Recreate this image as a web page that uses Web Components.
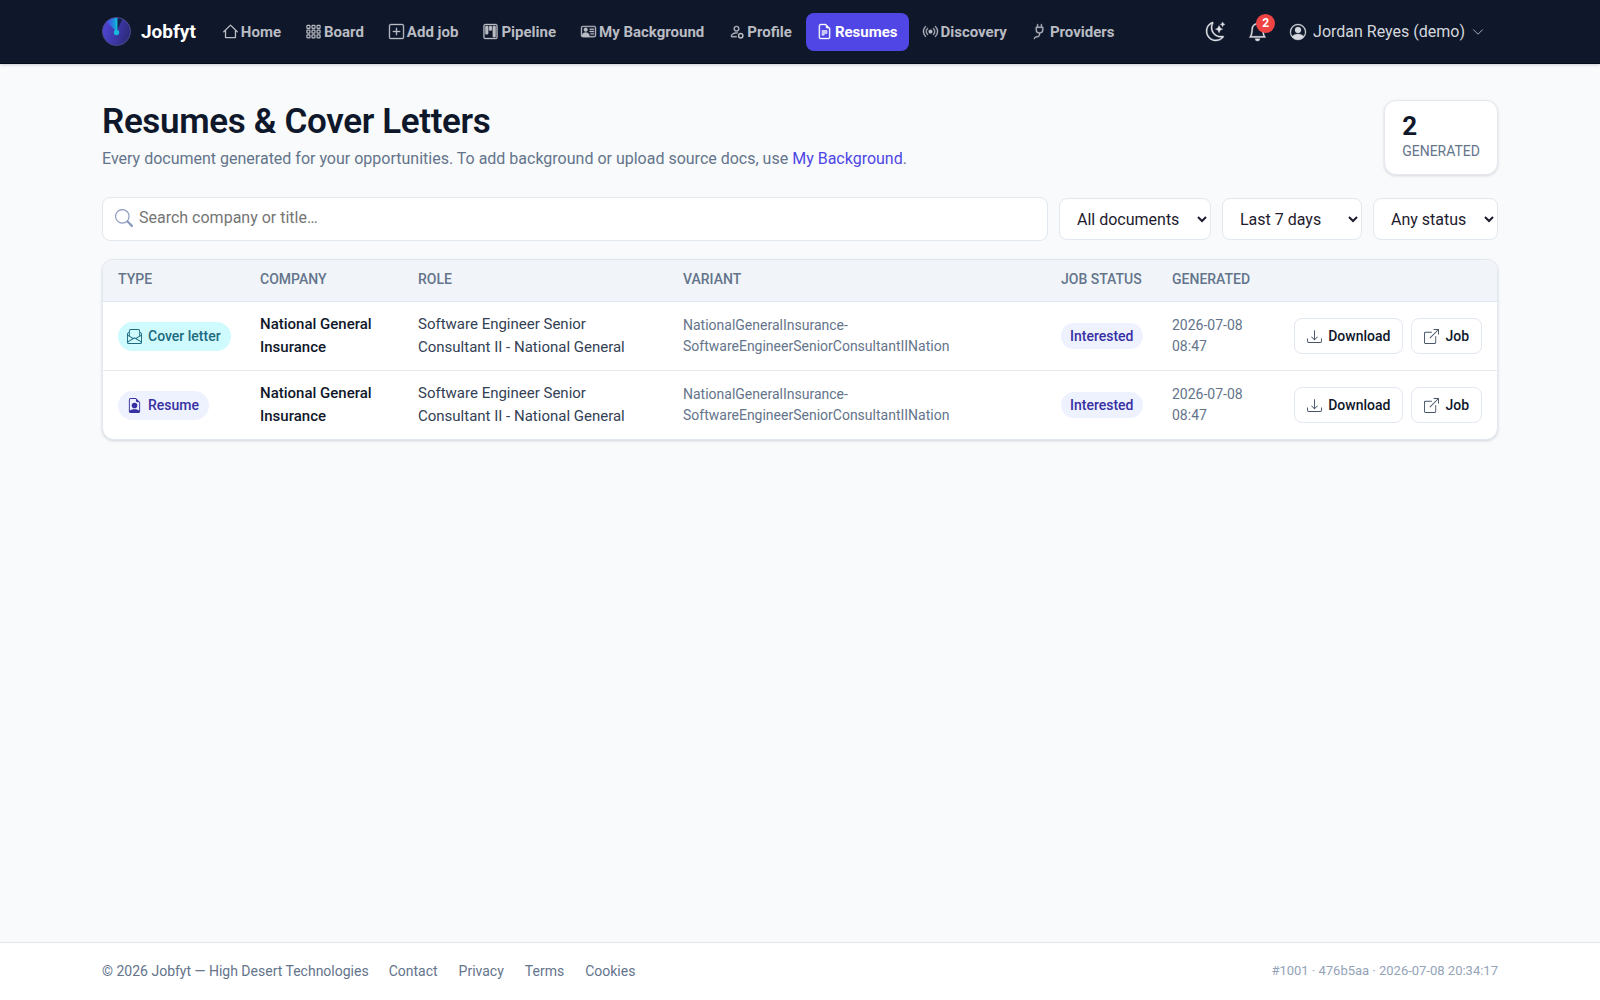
<!DOCTYPE html>
<html lang="en">
<head>
<meta charset="utf-8">
<meta name="viewport" content="width=device-width, initial-scale=1">
<title>Resumes &amp; Cover Letters - Jobfyt</title>
<style>
html{height:100%}
body{margin:0;min-height:100%;background:#f8fafc;color:#0f172a;font:15px/22px Roboto,"Liberation Sans",sans-serif}
</style>
</head>
<body>
<jf-app></jf-app>
<script>
const ICONS = {
  house:'<path d="M.8 8.3 8 1.2l7.200 7.100M2.700 6.600V14.500h10.600V6.600" fill="none" stroke="currentColor" stroke-width="1.400" stroke-linecap="round" stroke-linejoin="round"/>',
  grid:'<g fill="none" stroke="currentColor" stroke-width="1.300"><rect x="1" y="1.500" width="3.200" height="3.200" rx=".6"/><rect x="6.400" y="1.500" width="3.200" height="3.200" rx=".6"/><rect x="11.800" y="1.500" width="3.200" height="3.200" rx=".6"/><rect x="1" y="6.500" width="3.200" height="3.200" rx=".6"/><rect x="6.400" y="6.500" width="3.200" height="3.200" rx=".6"/><rect x="11.800" y="6.500" width="3.200" height="3.200" rx=".6"/><rect x="1" y="11.500" width="3.200" height="3.200" rx=".6"/><rect x="6.400" y="11.500" width="3.200" height="3.200" rx=".6"/><rect x="11.800" y="11.500" width="3.200" height="3.200" rx=".6"/></g>',
  plus:'<path d="M14 1a1 1 0 0 1 1 1v12a1 1 0 0 1-1 1H2a1 1 0 0 1-1-1V2a1 1 0 0 1 1-1zM2 0a2 2 0 0 0-2 2v12a2 2 0 0 0 2 2h12a2 2 0 0 0 2-2V2a2 2 0 0 0-2-2z"/><path d="M8 4a.5.5 0 0 1 .5.5v3h3a.5.5 0 0 1 0 1h-3v3a.5.5 0 0 1-1 0v-3h-3a.5.5 0 0 1 0-1h3v-3A.5.5 0 0 1 8 4"/>',
  kanban:'<path d="M13.500 1a1 1 0 0 1 1 1v12a1 1 0 0 1-1 1h-11a1 1 0 0 1-1-1V2a1 1 0 0 1 1-1zm-11-1a2 2 0 0 0-2 2v12a2 2 0 0 0 2 2h11a2 2 0 0 0 2-2V2a2 2 0 0 0-2-2z"/><path d="M6.500 3a1 1 0 0 1 1-1h1a1 1 0 0 1 1 1v3a1 1 0 0 1-1 1h-1a1 1 0 0 1-1-1zm-4 0a1 1 0 0 1 1-1h1a1 1 0 0 1 1 1v7a1 1 0 0 1-1 1h-1a1 1 0 0 1-1-1zm8 0a1 1 0 0 1 1-1h1a1 1 0 0 1 1 1v10a1 1 0 0 1-1 1h-1a1 1 0 0 1-1-1z"/>',
  vcard:'<path d="M5 8a2 2 0 1 0 0-4 2 2 0 0 0 0 4m4-2.500a.5.5 0 0 1 .5-.5h4a.5.5 0 0 1 0 1h-4a.5.5 0 0 1-.5-.5M9 8a.5.5 0 0 1 .5-.5h4a.5.5 0 0 1 0 1h-4A.5.5 0 0 1 9 8m1 2.500a.5.5 0 0 1 .5-.5h3a.5.5 0 0 1 0 1h-3a.5.5 0 0 1-.5-.5"/><path d="M2 2a2 2 0 0 0-2 2v8a2 2 0 0 0 2 2h12a2 2 0 0 0 2-2V4a2 2 0 0 0-2-2zM1 4a1 1 0 0 1 1-1h12a1 1 0 0 1 1 1v8a1 1 0 0 1-1 1H8.960q.04-.245.040-.5C9 10.567 7.210 9 5 9c-2.086 0-3.800 1.398-3.984 3.181A1 1 0 0 1 1 12z"/>',
  gear:'<path d="M11 5a3 3 0 1 1-6 0 3 3 0 0 1 6 0M8 7a2 2 0 1 0 0-4 2 2 0 0 0 0 4m.256 7a4.500 4.500 0 0 1-.229-1.004H3c.001-.246.154-.986.832-1.664C4.484 10.680 5.711 10 8 10q.39 0 .74.025c.226-.341.496-.65.804-.918Q8.844 9.002 8 9c-5 0-6 3-6 4s1 1 1 1z"/><circle cx="12.500" cy="12.500" r="2.300" fill="none" stroke="currentColor" stroke-width="1.600"/>',
  file:'<path d="M5.500 7a.5.5 0 0 0 0 1h5a.5.5 0 0 0 0-1zM5 9.500a.5.5 0 0 1 .5-.5h5a.5.5 0 0 1 0 1h-5a.5.5 0 0 1-.5-.5m0 2a.5.5 0 0 1 .5-.5h2a.5.5 0 0 1 0 1h-2a.5.5 0 0 1-.5-.5"/><path d="M9.500 0H4a2 2 0 0 0-2 2v12a2 2 0 0 0 2 2h8a2 2 0 0 0 2-2V4.500zm0 1v2A1.500 1.500 0 0 0 11 4.500h2V14a1 1 0 0 1-1 1H4a1 1 0 0 1-1-1V2a1 1 0 0 1 1-1z"/>',
  broadcast:'<path d="M3.050 3.050a7 7 0 0 0 0 9.900.5.5 0 0 1-.707.707 8 8 0 0 1 0-11.314.5.5 0 0 1 .707.707m2.122 2.122a4 4 0 0 0 0 5.656.5.5 0 1 1-.708.708 5 5 0 0 1 0-7.072.5.5 0 0 1 .708.708m5.656-.708a.5.5 0 0 1 .708 0 5 5 0 0 1 0 7.072.5.5 0 1 1-.708-.708 4 4 0 0 0 0-5.656.5.5 0 0 1 0-.708m2.122-2.120a.5.5 0 0 1 .707 0 8 8 0 0 1 0 11.313.5.5 0 0 1-.707-.707 7 7 0 0 0 0-9.900.5.5 0 0 1 0-.707zM10 8a2 2 0 1 1-4 0 2 2 0 0 1 4 0"/>',
  plug:'<path d="M6 0a.5.5 0 0 1 .5.5V3h3V.5a.5.5 0 0 1 1 0V3h1a.5.5 0 0 1 .5.5v3A3.500 3.500 0 0 1 8.500 10c-.002.434-.01.845-.04 1.220-.041.514-.126 1.003-.317 1.424a2.080 2.080 0 0 1-.97 1.028C6.725 13.900 6.169 14 5.500 14c-.998 0-1.610.33-1.974.718A1.920 1.920 0 0 0 3 16H2c0-.616.232-1.367.797-1.968C3.374 13.420 4.261 13 5.500 13c.581 0 .962-.088 1.218-.219.241-.123.400-.300.514-.550.121-.266.193-.621.230-1.090.027-.340.035-.718.037-1.141A3.500 3.500 0 0 1 4 6.500v-3a.5.5 0 0 1 .5-.5h1V.5A.5.5 0 0 1 6 0M5 4v2.500A2.500 2.500 0 0 0 7.500 9h1A2.500 2.500 0 0 0 11 6.500V4z"/>',
  moon:'<path d="M6 .278a.77.77 0 0 1 .080.858 7.200 7.200 0 0 0-.878 3.460c0 4.021 3.278 7.277 7.318 7.277q.792-.001 1.533-.160a.79.79 0 0 1 .810.316.73.73 0 0 1-.031.893A8.350 8.350 0 0 1 8.344 16C3.734 16 0 12.286 0 7.710 0 4.266 2.114 1.312 5.124.060A.75.75 0 0 1 6 .278M4.858 1.311A7.270 7.270 0 0 0 1.025 7.710c0 4.020 3.279 7.276 7.319 7.276a7.320 7.320 0 0 0 5.205-2.162q-.506.063-1.029.063c-4.610 0-8.343-3.714-8.343-8.290 0-1.167.242-2.278.681-3.286"/><path d="M10.794 3.148a.217.217 0 0 1 .412 0l.387 1.162c.173.518.579.924 1.097 1.097l1.162.387a.217.217 0 0 1 0 .412l-1.162.387a1.730 1.730 0 0 0-1.097 1.097l-.387 1.162a.217.217 0 0 1-.412 0l-.387-1.162A1.730 1.730 0 0 0 9.310 6.593l-1.162-.387a.217.217 0 0 1 0-.412l1.162-.387a1.730 1.730 0 0 0 1.097-1.097zM13.863.099a.145.145 0 0 1 .274 0l.258.774c.115.346.386.617.732.732l.774.258a.145.145 0 0 1 0 .274l-.774.258a1.160 1.160 0 0 0-.732.732l-.258.774a.145.145 0 0 1-.274 0l-.258-.774a1.160 1.160 0 0 0-.732-.732l-.774-.258a.145.145 0 0 1 0-.274l.774-.258c.346-.115.617-.386.732-.732z"/>',
  bell:'<path d="M8 16a2 2 0 0 0 2-2H6a2 2 0 0 0 2 2M8 1.918l-.797.161A4 4 0 0 0 4 6c0 .628-.134 2.197-.459 3.742-.160.767-.376 1.566-.663 2.258h10.244c-.287-.692-.502-1.490-.663-2.258C12.134 8.197 12 6.628 12 6a4 4 0 0 0-3.203-3.920zM14.220 12c.223.447.481.801.780 1H1c.299-.199.557-.553.780-1C2.680 10.200 3 6.880 3 6c0-2.420 1.720-4.440 4.005-4.901a1 1 0 1 1 1.990 0A5 5 0 0 1 13 6c0 .880.320 4.200 1.220 6"/>',
  user:'<path d="M11 6a3 3 0 1 1-6 0 3 3 0 0 1 6 0"/><path fill-rule="evenodd" d="M0 8a8 8 0 1 1 16 0A8 8 0 0 1 0 8m8-7a7 7 0 0 0-5.468 11.370C3.242 11.226 4.805 10 8 10s4.757 1.225 5.468 2.370A7 7 0 0 0 8 1"/>',
  chevron:'<path d="m2 5 6 6 6-6" fill="none" stroke="currentColor" stroke-width="1.300" stroke-linecap="round" stroke-linejoin="round"/>',
  search:'<path d="M11.742 10.344a6.500 6.500 0 1 0-1.397 1.398h-.001q.044.060.098.115l3.850 3.850a1 1 0 0 0 1.415-1.414l-3.850-3.850a1 1 0 0 0-.115-.100zM12 6.500a5.500 5.500 0 1 1-11 0 5.500 5.500 0 0 1 11 0"/>',
  letter:'<path d="M4 0a2 2 0 0 0-2 2v1.133l-.941.502A2 2 0 0 0 0 5.400V14a2 2 0 0 0 2 2h12a2 2 0 0 0 2-2V5.400a2 2 0 0 0-1.059-1.765L14 3.133V2a2 2 0 0 0-2-2zm10 4.267.470.250A1 1 0 0 1 15 5.400v.817l-1 .600zm-1 3.150-3.750 2.250L8 8.917l-1.250.750L3 7.417V2a1 1 0 0 1 1-1h8a1 1 0 0 1 1 1zm-11-.600-1-.600V5.400a1 1 0 0 1 .530-.882L2 4.267zm13 .566v5.734l-4.778-2.867zm-.035 6.880A1 1 0 0 1 14 15H2a1 1 0 0 1-.965-.738L8 10.083zM1 13.116V7.383l4.778 2.867z"/>',
  person:'<path d="M11 8a3 3 0 1 1-6 0 3 3 0 0 1 6 0"/><path d="M14 14V4.500L9.500 0H4a2 2 0 0 0-2 2v12a2 2 0 0 0 2 2h8a2 2 0 0 0 2-2M9.500 3A1.500 1.500 0 0 0 11 4.500h2v9.255S12 12 8 12s-5 1.755-5 1.755V2a1 1 0 0 1 1-1h5.500z"/>',
  download:'<path d="M.5 9.900a.5.5 0 0 1 .5.5v2.500a1 1 0 0 0 1 1h12a1 1 0 0 0 1-1v-2.500a.5.5 0 0 1 1 0v2.500a2 2 0 0 1-2 2H2a2 2 0 0 1-2-2v-2.500a.5.5 0 0 1 .5-.5"/><path d="M7.646 11.854a.5.5 0 0 0 .708 0l3-3a.5.5 0 0 0-.708-.708L8.500 10.293V1.500a.5.5 0 0 0-1 0v8.793L5.354 8.146a.5.5 0 1 0-.708.708z"/>',
  external:'<path d="M8.636 3.500a.5.5 0 0 0-.5-.5H1.500A1.500 1.500 0 0 0 0 4.500v10A1.500 1.500 0 0 0 1.500 16h10a1.500 1.500 0 0 0 1.500-1.500V7.864a.5.5 0 0 0-1 0V14.500a.5.5 0 0 1-.5.5h-10a.5.5 0 0 1-.5-.5v-10a.5.5 0 0 1 .5-.5h6.636a.5.5 0 0 0 .5-.5"/><path d="M16 .5a.5.5 0 0 0-.5-.5h-5a.5.5 0 0 0 0 1h3.793L6.146 9.146a.5.5 0 1 0 .708.708L15 1.707V5.500a.5.5 0 0 0 1 0z"/>'
};

function define(name, html) {
  customElements.define(name, class extends HTMLElement {
    constructor() {
      super();
      this.attachShadow({mode: 'open'}).innerHTML = html;
    }
  });
}

customElements.define('jf-icon', class extends HTMLElement {
  connectedCallback() {
    if (this.shadowRoot) return;
    this.attachShadow({mode: 'open'}).innerHTML =
      `<style>:host{display:inline-flex;flex:none;width:var(--icon,16px);height:var(--icon,16px)}svg{width:100%;height:100%;display:block;overflow:visible;stroke:currentColor;stroke-width:var(--bold,0)}</style>
       <svg viewBox="0 0 16 16" fill="currentColor" aria-hidden="true">${ICONS[this.getAttribute('name')]}</svg>`;
  }
});

customElements.define('jf-navlink', class extends HTMLElement {
  connectedCallback() {
    if (this.shadowRoot) return;
    this.attachShadow({mode: 'open'}).innerHTML =
      `<style>
        :host{display:block}
        a{display:flex;align-items:center;gap:3px;padding:8px 11px;border-radius:8px;color:#b9bcc3;font-weight:700;font-size:15px;line-height:22px;text-decoration:none;white-space:nowrap;--icon:15px;--bold:.4}
        :host([active]) a{background:#4f46e5;color:#fff}
      </style>
      <a href="#"><jf-icon name="${this.getAttribute('icon')}"></jf-icon><span><slot></slot></span></a>`;
  }
});

define('jf-logo', `
<style>:host{display:block;flex:none;width:29px;height:29px}svg{display:block;width:100%;height:100%}</style>
<svg viewBox="0 0 30 30" aria-hidden="true">
  <defs><linearGradient id="g" x1="0" y1="0.300" x2="1" y2="0.600"><stop offset="0" stop-color="#4f46d8"/><stop offset="1" stop-color="#2c2a78"/></linearGradient>
  <linearGradient id="s" x1="0" y1="0" x2="1" y2="0"><stop offset="0" stop-color="#4f46e5"/><stop offset="1" stop-color="#0ea5d8"/></linearGradient></defs>
  <circle cx="15" cy="15" r="14.500" fill="url(#g)" stroke="#4a4a8a"/>
  <path d="M15 15V1A14 14 0 0 0 5 5.200z" fill="url(#s)"/>
  <path d="M15 15V1A14 14 0 0 1 21 2.500z" fill="#14224a"/>
  <path d="M15 15V1" stroke="#16b8dc" stroke-width="2"/>
  <circle cx="15" cy="16" r="2.800" fill="#16b8dc"/>
</svg>`);

define('jf-header', `
<style>
  :host{display:block;background:#0f172a;border-bottom:1px solid #060b1a;box-shadow:0 1px 3px rgba(15,23,42,.2);box-sizing:border-box}
  .bar{display:flex;align-items:center;max-width:1396px;margin:0 auto;height:63px}
  .brand{display:flex;align-items:center;gap:10px;color:#fff;font-weight:700;font-size:19px;text-decoration:none;margin-right:16px}
  nav{display:flex;align-items:center;gap:3px}
  .right{display:flex;align-items:center;margin-left:auto;color:#e2e4e9}
  button{font:inherit;color:inherit;background:none;border:0;padding:0;display:flex;align-items:center;cursor:pointer}
  .round{--icon:19px;--bold:.3;position:relative;margin-right:23px}
  .badge{position:absolute;left:8px;top:-8px;width:19px;height:19px;border-radius:50%;background:#ef4444;color:#fff;font-size:12px;line-height:19px;font-weight:700;text-align:center}
  .account{font-size:16px;gap:7px;margin-right:14px;color:#d5d8de}
  .account jf-icon{--icon:16px;--bold:.3}
  .account .chev{--icon:12px;color:#aab0bc}
</style>
<div class="bar">
  <a class="brand" href="#"><jf-logo></jf-logo><span>Jobfyt</span></a>
  <nav aria-label="Main">
    <jf-navlink icon="house">Home</jf-navlink><jf-navlink icon="grid">Board</jf-navlink><jf-navlink icon="plus">Add job</jf-navlink><jf-navlink icon="kanban">Pipeline</jf-navlink><jf-navlink icon="vcard">My Background</jf-navlink><jf-navlink icon="gear">Profile</jf-navlink><jf-navlink icon="file" active>Resumes</jf-navlink><jf-navlink icon="broadcast">Discovery</jf-navlink><jf-navlink icon="plug">Providers</jf-navlink>
  </nav>
  <div class="right">
    <button class="round" aria-label="Theme"><jf-icon name="moon"></jf-icon></button>
    <button class="round" aria-label="Notifications"><jf-icon name="bell"></jf-icon><span class="badge">2</span></button>
    <button class="account"><jf-icon name="user"></jf-icon><span>Jordan Reyes (demo)</span><jf-icon class="chev" name="chevron"></jf-icon></button>
  </div>
</div>`);

define('jf-stat', `
<style>
  :host{display:flex;flex-direction:column;box-sizing:border-box;padding:11px 17px 12px;background:#fff;border:1px solid #e5e9ef;border-radius:12px;box-shadow:0 1px 3px rgba(15,23,42,.14)}
  b{font-size:26px;line-height:29px;font-weight:700}
  span{font-size:14px;line-height:21px;color:#64748b;text-transform:uppercase}
</style>
<b><slot name="value"></slot></b><span><slot></slot></span>`);

define('jf-filters', `
<style>
  :host{display:flex;align-items:center;gap:11px}
  .search{flex:1;display:flex;align-items:center;gap:6px;box-sizing:border-box;height:44px;padding:0 12px 2px;background:#fff;border:1px solid #e2e8f0;border-radius:8px;--icon:18px;color:#8c9abf}
  input{flex:1;min-width:0;border:0;outline:0;background:none;padding:0;font:16px/22px Roboto,sans-serif;color:#0f172a}
  input::placeholder{color:#757575}
  select{box-sizing:border-box;height:42px;padding:0 0 0 13px;border:1px solid #e2e8f0;border-radius:8px;background:#fff;color:#1e1b2e;font:16px/22px Roboto,sans-serif}
  .type{width:152px}.when{width:140px}.status{width:125px}
</style>
<label class="search"><jf-icon name="search"></jf-icon><input type="search" aria-label="Search" placeholder="Search company or title…"></label>
<select class="type" aria-label="Document type"><option>All documents</option></select>
<select class="when" aria-label="Period"><option>Last 7 days</option></select>
<select class="status" aria-label="Status"><option>Any status</option></select>`);

define('jf-pill', `
<style>
  :host{display:inline-flex;align-items:center;gap:6px;padding:4px 10px 4px 9px;border-radius:15px;background:#eef2ff;color:#3730a3;font-weight:500;font-size:14px;line-height:21px;white-space:nowrap;vertical-align:middle;--icon:15px}
  :host([kind=letter]){background:#cffafe;color:#1c6b80}
  :host([kind=status]){padding:3px 9px;line-height:20px}
</style><slot name="icon"></slot><span><slot></slot></span>`);

customElements.define('jf-action', class extends HTMLElement {
  connectedCallback() {
    if (this.shadowRoot) return;
    this.attachShadow({mode: 'open'}).innerHTML =
      `<style>
        :host{display:block}
        a{display:flex;align-items:center;gap:6px;box-sizing:border-box;height:36px;padding:0 12px;border:1px solid #e2e8f0;border-radius:8px;background:#fff;color:#0f172a;font-weight:500;font-size:14px;text-decoration:none;white-space:nowrap;--icon:15px}
        jf-icon{color:#475569}
      </style>
      <a href="#"><jf-icon name="${this.getAttribute('icon')}"></jf-icon><span><slot></slot></span></a>`;
  }
});

const row = (kind, icon, label) => `
<tr>
  <td><jf-pill kind="${kind}"><jf-icon slot="icon" name="${icon}"></jf-icon>${label}</jf-pill></td>
  <td class="company">National General Insurance</td>
  <td class="role">Software Engineer Senior Consultant II - National General</td>
  <td class="small">NationalGeneralInsurance-SoftwareEngineerSeniorConsultantIINation</td>
  <td><jf-pill kind="status">Interested</jf-pill></td>
  <td class="small">2026-07-08 08:47</td>
  <td><div class="actions"><jf-action icon="download">Download</jf-action><jf-action icon="external">Job</jf-action></div></td>
</tr>`;

define('jf-table', `
<style>
  :host{display:block;background:#fff;border:1px solid #e2e8f0;border-radius:12px;box-shadow:0 1px 3px rgba(15,23,42,.16);overflow:hidden}
  table{width:100%;border-collapse:separate;border-spacing:0;table-layout:fixed}
  th{height:42px;padding:0 15px 4px;box-sizing:border-box;background:#f1f5f9;border-bottom:1px solid #e2e8f0;color:#64748b;font-size:14px;font-weight:500;line-height:20px;text-align:left;text-transform:uppercase;white-space:nowrap}
  td{padding:11px 15px;vertical-align:middle}
  tbody tr+tr td{border-top:1px solid #e8ecf1}
  .company{font-weight:500;line-height:23px}
  .role{color:#334155;line-height:23px}
  .small{color:#64748b;font-size:14px;line-height:21px}
  .actions{display:flex;gap:8px;justify-content:flex-end}
  .c1{width:142px}.c2{width:158px}.c3{width:265px}.c5{width:111px}.c6{width:112px}.c7{width:228px}
</style>
<table>
  <colgroup><col class="c1"><col class="c2"><col class="c3"><col><col class="c5"><col class="c6"><col class="c7"></colgroup>
  <thead><tr><th>Type</th><th>Company</th><th>Role</th><th>Variant</th><th>Job status</th><th>Generated</th><th aria-label="Actions"></th></tr></thead>
  <tbody>${row('letter', 'letter', 'Cover letter')}${row('resume', 'person', 'Resume')}</tbody>
</table>`);

define('jf-footer', `
<style>
  :host{display:block;background:#fff;border-top:1px solid #e2e8f0;color:#64748b;font-size:14px;line-height:20px}
  .bar{display:flex;align-items:center;max-width:1396px;margin:0 auto;padding:18px 0 19px}
  nav{display:flex;gap:21px;margin-left:20px}
  a{color:inherit;text-decoration:none}
  .build{margin-left:auto;color:#94a3b8;font-size:13px}
</style>
<div class="bar"><span>© 2026 Jobfyt — High Desert Technologies</span>
<nav aria-label="Footer"><a href="#">Contact</a><a href="#">Privacy</a><a href="#">Terms</a><a href="#">Cookies</a></nav>
<span class="build">#1001 · 476b5aa · 2026-07-08 20:34:17</span></div>`);

define('jf-app', `
<style>
  :host{display:flex;flex-direction:column;min-height:100vh}
  main{flex:1;width:100%;max-width:1396px;margin:0 auto;padding-top:36px}
  .head{display:flex;justify-content:space-between;align-items:flex-start;margin-bottom:22px}
  h1{margin:0;font-size:35px;line-height:44px;font-weight:600;letter-spacing:-.01em}
  p{margin:3px 0 0;color:#64748b;font-size:16px;line-height:24px}
  p a{color:#4f46e5;text-decoration:none}
  jf-filters{margin-bottom:18px}
</style>
<jf-header></jf-header>
<main>
  <div class="head">
    <div><h1>Resumes &amp; Cover Letters</h1>
    <p>Every document generated for your opportunities. To add background or upload source docs, use <a href="#">My Background</a>.</p></div>
    <jf-stat><span slot="value">2</span>Generated</jf-stat>
  </div>
  <jf-filters></jf-filters>
  <jf-table></jf-table>
</main>
<jf-footer></jf-footer>`);
</script>
</body>
</html>
